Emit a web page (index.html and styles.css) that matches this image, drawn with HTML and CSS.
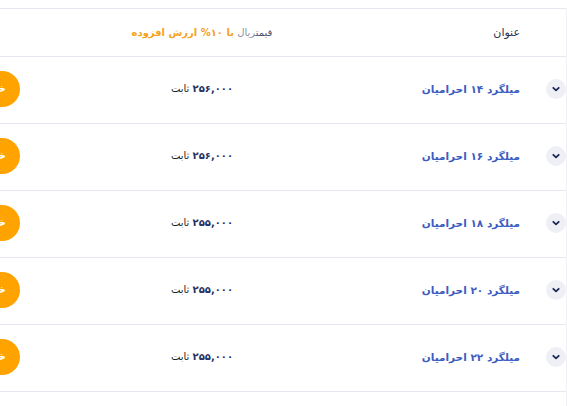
FILE: index.html
```html
<!DOCTYPE html>
<html lang="fa" dir="rtl">
<head>
<meta charset="utf-8">
<link rel="stylesheet" href="styles.css">
</head>
<body>
<div class="wrap">
  <div class="table">
    <div class="row head">
      <div class="c-chev"></div>
      <div class="c-title">عنوان</div>
      <div class="c-price"><span class="h-dark">قیمت</span><span class="h-light">ریال</span> <span class="h-orange">با ۱۰% ارزش افزوده</span></div>
      <div class="c-btn"></div>
    </div>
    <div class="row">
      <div class="c-chev"><span class="chev"><svg viewBox="0 0 10 10" width="10" height="10"><path d="M2.3 3.8 L5 6.4 L7.7 3.8" fill="none" stroke="#1d2a57" stroke-width="1.8" stroke-linecap="round" stroke-linejoin="round"/></svg></span></div>
      <div class="c-title link">میلگرد ۱۴ احرامیان</div>
      <div class="c-price"><span class="num">۲۵۶,۰۰۰</span> <span class="unit">ثابت</span></div>
      <div class="c-btn"><span class="btn">خرید</span></div>
    </div>
    <div class="row">
      <div class="c-chev"><span class="chev"><svg viewBox="0 0 10 10" width="10" height="10"><path d="M2.3 3.8 L5 6.4 L7.7 3.8" fill="none" stroke="#1d2a57" stroke-width="1.8" stroke-linecap="round" stroke-linejoin="round"/></svg></span></div>
      <div class="c-title link">میلگرد ۱۶ احرامیان</div>
      <div class="c-price"><span class="num">۲۵۶,۰۰۰</span> <span class="unit">ثابت</span></div>
      <div class="c-btn"><span class="btn">خرید</span></div>
    </div>
    <div class="row">
      <div class="c-chev"><span class="chev"><svg viewBox="0 0 10 10" width="10" height="10"><path d="M2.3 3.8 L5 6.4 L7.7 3.8" fill="none" stroke="#1d2a57" stroke-width="1.8" stroke-linecap="round" stroke-linejoin="round"/></svg></span></div>
      <div class="c-title link">میلگرد ۱۸ احرامیان</div>
      <div class="c-price"><span class="num">۲۵۵,۰۰۰</span> <span class="unit">ثابت</span></div>
      <div class="c-btn"><span class="btn">خرید</span></div>
    </div>
    <div class="row">
      <div class="c-chev"><span class="chev"><svg viewBox="0 0 10 10" width="10" height="10"><path d="M2.3 3.8 L5 6.4 L7.7 3.8" fill="none" stroke="#1d2a57" stroke-width="1.8" stroke-linecap="round" stroke-linejoin="round"/></svg></span></div>
      <div class="c-title link">میلگرد ۲۰ احرامیان</div>
      <div class="c-price"><span class="num">۲۵۵,۰۰۰</span> <span class="unit">ثابت</span></div>
      <div class="c-btn"><span class="btn">خرید</span></div>
    </div>
    <div class="row">
      <div class="c-chev"><span class="chev"><svg viewBox="0 0 10 10" width="10" height="10"><path d="M2.3 3.8 L5 6.4 L7.7 3.8" fill="none" stroke="#1d2a57" stroke-width="1.8" stroke-linecap="round" stroke-linejoin="round"/></svg></span></div>
      <div class="c-title link">میلگرد ۲۲ احرامیان</div>
      <div class="c-price"><span class="num">۲۵۵,۰۰۰</span> <span class="unit">ثابت</span></div>
      <div class="c-btn"><span class="btn">خرید</span></div>
    </div>
  </div>
</div>
</body>
</html>
```

FILE: styles.css
```css
html, body {
  margin: 0;
  padding: 0;
  background: #ffffff;
}
body {
  font-family: "DejaVu Sans", sans-serif;
  direction: rtl;
}
.wrap {
  width: 567px;
  box-sizing: border-box;
  border-right: 1px solid #f1f1f5;
  margin-top: 8px;
  overflow: hidden;
  height: 398px;
}
.table {
  width: 640px;
  border-top: 1px solid #e6e6ee;
}
.row {
  display: grid;
  grid-template-columns: 46px 219px 198px 1fr;
  align-items: center;
  box-sizing: border-box;
  height: 67px;
  padding-bottom: 3px;
  border-bottom: 1px solid #e6e6ee;
}
.row.head {
  height: 48px;
  padding-bottom: 1px;
}
.c-chev {
  display: flex;
  justify-content: flex-start;
}
.chev {
  width: 20px;
  height: 20px;
  border-radius: 50%;
  background: #eef0f5;
  display: flex;
  align-items: center;
  justify-content: center;
}
.chev svg {
  display: block;
}
.c-title {
  font-size: 11px;
  color: #262d4f;
  text-align: right;
}
.c-title.link {
  color: #3d5cbf;
  font-weight: bold;
  font-size: 10.5px;
}
.c-price {
  text-align: center;
  font-size: 10px;
  white-space: nowrap;
}
.h-dark { color: #4b5270; }
.h-light { color: #8a8fa6; }
.h-orange { color: #f7a21b; font-weight: bold; }
.num { color: #26315f; font-weight: bold; }
.unit { color: #1f1f1f; }
.c-btn {
  padding-right: 83px;
  display: flex;
}
.btn {
  height: 36px;
  border-radius: 18px;
  background: #ffa300;
  color: #ffffff;
  font-weight: bold;
  font-size: 11px;
  line-height: 36px;
  padding: 0 14px;
}
```
